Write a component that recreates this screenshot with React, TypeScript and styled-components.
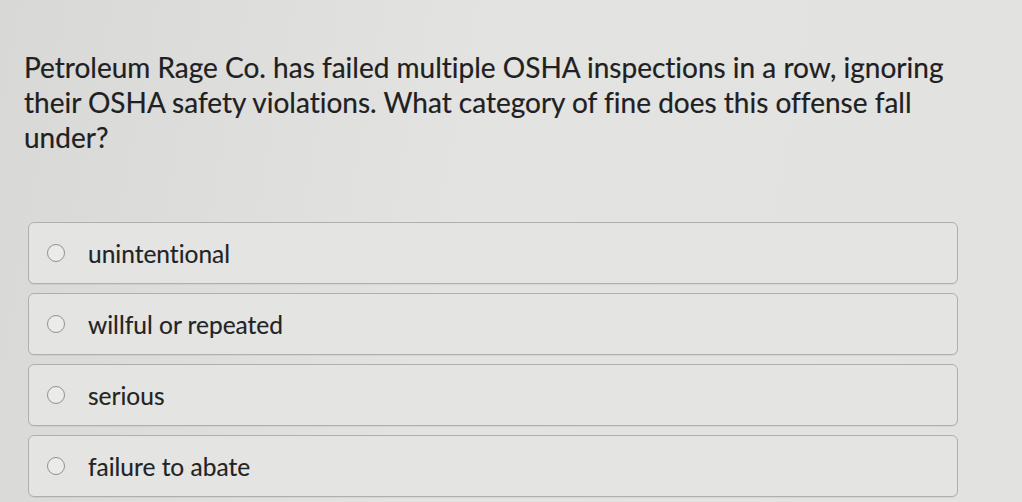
import styled, { createGlobalStyle } from "styled-components";

const GlobalStyle = createGlobalStyle`
  html, body {
    margin: 0;
    padding: 0;
    background: #dfe0de;
  }
  body {
    font-family: Lato, "Open Sans", sans-serif;
    font-variant-ligatures: none;
  }
`;

const options = [
  "unintentional",
  "willful or repeated",
  "serious",
  "failure to abate",
];

const App = () => {
  return (
    <>
      <GlobalStyle />
      <Page>
        <Question>
          Petroleum Rage Co. has failed multiple OSHA inspections in a row, ignoring
          <br />
          their OSHA safety violations. What category of fine does this offense fall
          <br />
          under?
        </Question>
        <Options>
          {options.map((label) => (
            <Option key={label}>
              <Radio type="radio" name="fine" />
              <Label>{label}</Label>
            </Option>
          ))}
        </Options>
      </Page>
    </>
  );
};

const Page = styled.div`
  width: 1022px;
  height: 502px;
  box-sizing: border-box;
  padding: 50px 40px 0 24px;
  overflow: hidden;
  background: linear-gradient(100deg, #d8d9d7 0%, #e3e4e2 45%, #e2e3e1 100%);
`;

const Question = styled.p`
  margin: 0;
  font-size: 28px;
  line-height: 35px;
  color: #1f2021;
  -webkit-text-stroke: 0.2px #1f2021;
`;

const Options = styled.div`
  display: flex;
  flex-direction: column;
  gap: 9px;
  margin-top: 67px;
  margin-left: 4px;
  width: 930px;
`;

const Option = styled.label`
  display: flex;
  align-items: center;
  gap: 23px;
  height: 62px;
  flex-shrink: 0;
  box-sizing: border-box;
  padding-left: 18px;
  border: 1px solid #adb0ae;
  border-radius: 6px;
  background: #e4e5e3;
  box-shadow: 0 1px 0 rgba(0, 0, 0, 0.05);
`;

const Radio = styled.input`
  appearance: none;
  flex-shrink: 0;
  margin: 0;
  width: 18px;
  height: 18px;
  border: 1.5px solid #8f9291;
  border-radius: 50%;
  background: #ebecea;
`;

const Label = styled.span`
  font-size: 24.5px;
  color: #222324;
  -webkit-text-stroke: 0.15px #222324;
`;

export default App;
